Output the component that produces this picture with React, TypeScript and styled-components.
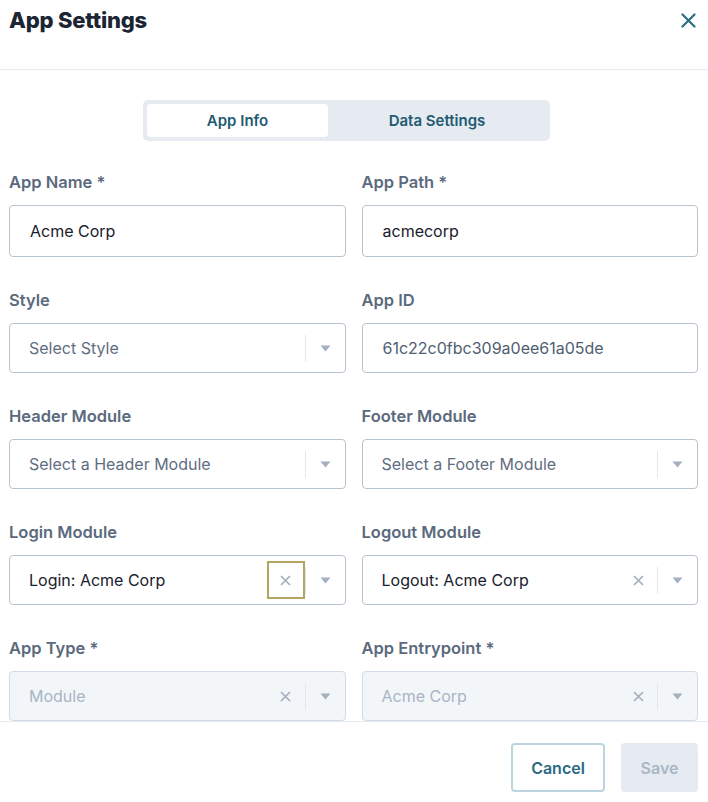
import styled, { createGlobalStyle } from "styled-components";

const GlobalStyle = createGlobalStyle`
  html, body {
    margin: 0;
    padding: 0;
    background: #ffffff;
  }
  body {
    font-family: Inter, "Noto Sans", sans-serif;
  }
`;

const Modal = styled.div`
  display: flex;
  flex-direction: column;
  height: 100vh;
  background: #ffffff;
  overflow: hidden;
`;

const Header = styled.div`
  display: flex;
  justify-content: space-between;
  align-items: flex-start;
  height: 70px;
  padding: 6px 12px 0 9px;
  box-sizing: border-box;
  border-bottom: 1px solid #e6ebf0;
  flex-shrink: 0;
`;

const Title = styled.h1`
  margin: 0;
  font-size: 22px;
  line-height: 28px;
  font-weight: 800;
  color: #1c2533;
  letter-spacing: -0.2px;
`;

const CloseButton = styled.button`
  border: none;
  background: none;
  padding: 0;
  margin-top: 6px;
  width: 16px;
  height: 16px;
  display: flex;
  align-items: center;
  justify-content: center;
  cursor: pointer;
`;

const Body = styled.div`
  flex: 1;
  overflow: hidden;
  padding: 30px 10px 0 9px;
`;

const TabBar = styled.div`
  display: flex;
  width: 407px;
  height: 41px;
  margin: 0 auto 31px;
  padding: 4px;
  box-sizing: border-box;
  background: #e6eaf1;
  border-radius: 5px;
  position: relative;
  left: -7px;
`;

const Tab = styled.div<{ $active?: boolean }>`
  flex: ${({ $active }) => ($active ? "0 0 181px" : "1")};
  display: flex;
  align-items: center;
  justify-content: center;
  border-radius: 4px;
  background: ${({ $active }) => ($active ? "#ffffff" : "transparent")};
  font-size: 15px;
  font-weight: 600;
  color: #215b72;
`;

const Grid = styled.div`
  display: grid;
  grid-template-columns: 1fr 1fr;
  column-gap: 16px;
  row-gap: 33px;
`;

const Field = styled.div`
  display: flex;
  flex-direction: column;
`;

const Label = styled.label`
  font-size: 16.5px;
  line-height: 20px;
  font-weight: 600;
  color: #5b6a7d;
  margin-bottom: 13px;
`;

const TextBox = styled.div<{ $tall?: boolean; $muted?: boolean }>`
  height: ${({ $tall }) => ($tall ? "52px" : "50px")};
  box-sizing: border-box;
  border: 1px solid #b8c4d2;
  border-radius: 4px;
  display: flex;
  align-items: center;
  padding-left: 20px;
  font-size: 16px;
  color: ${({ $muted }) => ($muted ? "#4f5e70" : "#1a202c")};
`;

const SelectBox = styled.div<{ $disabled?: boolean }>`
  height: 50px;
  box-sizing: border-box;
  border: 1px solid ${({ $disabled }) => ($disabled ? "#d3dce6" : "#b8c4d2")};
  background: ${({ $disabled }) => ($disabled ? "#f3f6f9" : "#ffffff")};
  border-radius: 4px;
  display: flex;
  align-items: center;
  padding-left: 19px;
`;

const SelectValue = styled.div<{ $tone: "value" | "placeholder" | "disabled" }>`
  flex: 1;
  font-size: 16px;
  color: ${({ $tone }) =>
    $tone === "value" ? "#1a202c" : $tone === "placeholder" ? "#5f6d7f" : "#a7b5c4"};
`;

const Indicators = styled.div`
  display: flex;
  align-items: center;
  height: 100%;
`;

const ClearButton = styled.div<{ $focused?: boolean }>`
  width: 38px;
  height: 38px;
  box-sizing: border-box;
  display: flex;
  align-items: center;
  justify-content: center;
  border: 2px solid ${({ $focused }) => ($focused ? "#b5a562" : "transparent")};
`;

const Separator = styled.span`
  width: 1px;
  height: 27px;
  background: #e2e7ee;
`;

const Arrow = styled.div`
  width: 39px;
  display: flex;
  align-items: center;
  justify-content: center;
`;

const Footer = styled.div`
  flex-shrink: 0;
  height: 81px;
  box-sizing: border-box;
  border-top: 1px solid #e6ebf0;
  display: flex;
  justify-content: flex-end;
  align-items: flex-start;
  gap: 16px;
  padding: 21px 10px 0 0;
`;

const Button = styled.button<{ $primary?: boolean }>`
  height: 49px;
  box-sizing: border-box;
  border-radius: 4px;
  font-family: inherit;
  font-size: 16px;
  font-weight: 600;
  padding: 0;
  border: 2px solid ${({ $primary }) => ($primary ? "#e6eaf1" : "#bcd4de")};
  background: ${({ $primary }) => ($primary ? "#e6eaf1" : "#ffffff")};
  color: ${({ $primary }) => ($primary ? "#a8b7c7" : "#2a6a82")};
  width: ${({ $primary }) => ($primary ? "77px" : "94px")};
`;

const CloseIcon = () => (
  <svg width="15" height="15" viewBox="0 0 15 15">
    <path d="M1.5 1.5 L13.5 13.5 M13.5 1.5 L1.5 13.5" stroke="#2b6d85" strokeWidth="2.2" strokeLinecap="round" />
  </svg>
);

const SmallX = () => (
  <svg width="11" height="11" viewBox="0 0 11 11">
    <path d="M1 1 L10 10 M10 1 L1 10" stroke="#a3b0bf" strokeWidth="1.7" />
  </svg>
);

const Caret = () => (
  <svg width="11" height="7" viewBox="0 0 11 7">
    <path d="M0.5 0.5 L10.5 0.5 L5.5 6.5 Z" fill="#a3b0bf" />
  </svg>
);

type SelectProps = {
  value?: string;
  placeholder?: string;
  clearable?: boolean;
  focused?: boolean;
  disabled?: boolean;
};

function Select({ value, placeholder, clearable, focused, disabled }: SelectProps) {
  const tone = disabled ? "disabled" : value ? "value" : "placeholder";
  return (
    <SelectBox $disabled={disabled}>
      <SelectValue $tone={tone}>{value ?? placeholder}</SelectValue>
      <Indicators>
        {clearable && (
          <ClearButton $focused={focused}>
            <SmallX />
          </ClearButton>
        )}
        <Separator />
        <Arrow>
          <Caret />
        </Arrow>
      </Indicators>
    </SelectBox>
  );
}

function App() {
  return (
    <Modal>
      <GlobalStyle />
      <Header>
        <Title>App Settings</Title>
        <CloseButton aria-label="Close">
          <CloseIcon />
        </CloseButton>
      </Header>
      <Body>
        <TabBar>
          <Tab $active>App Info</Tab>
          <Tab>Data Settings</Tab>
        </TabBar>
        <Grid>
          <Field>
            <Label>App Name *</Label>
            <TextBox $tall>Acme Corp</TextBox>
          </Field>
          <Field>
            <Label>App Path *</Label>
            <TextBox $tall>acmecorp</TextBox>
          </Field>
          <Field>
            <Label>Style</Label>
            <Select placeholder="Select Style" />
          </Field>
          <Field>
            <Label>App ID</Label>
            <TextBox $muted>61c22c0fbc309a0ee61a05de</TextBox>
          </Field>
          <Field>
            <Label>Header Module</Label>
            <Select placeholder="Select a Header Module" />
          </Field>
          <Field>
            <Label>Footer Module</Label>
            <Select placeholder="Select a Footer Module" />
          </Field>
          <Field>
            <Label>Login Module</Label>
            <Select value="Login: Acme Corp" clearable focused />
          </Field>
          <Field>
            <Label>Logout Module</Label>
            <Select value="Logout: Acme Corp" clearable />
          </Field>
          <Field>
            <Label>App Type *</Label>
            <Select value="Module" clearable disabled />
          </Field>
          <Field>
            <Label>App Entrypoint *</Label>
            <Select value="Acme Corp" clearable disabled />
          </Field>
        </Grid>
      </Body>
      <Footer>
        <Button>Cancel</Button>
        <Button $primary>Save</Button>
      </Footer>
    </Modal>
  );
}

export default App;
